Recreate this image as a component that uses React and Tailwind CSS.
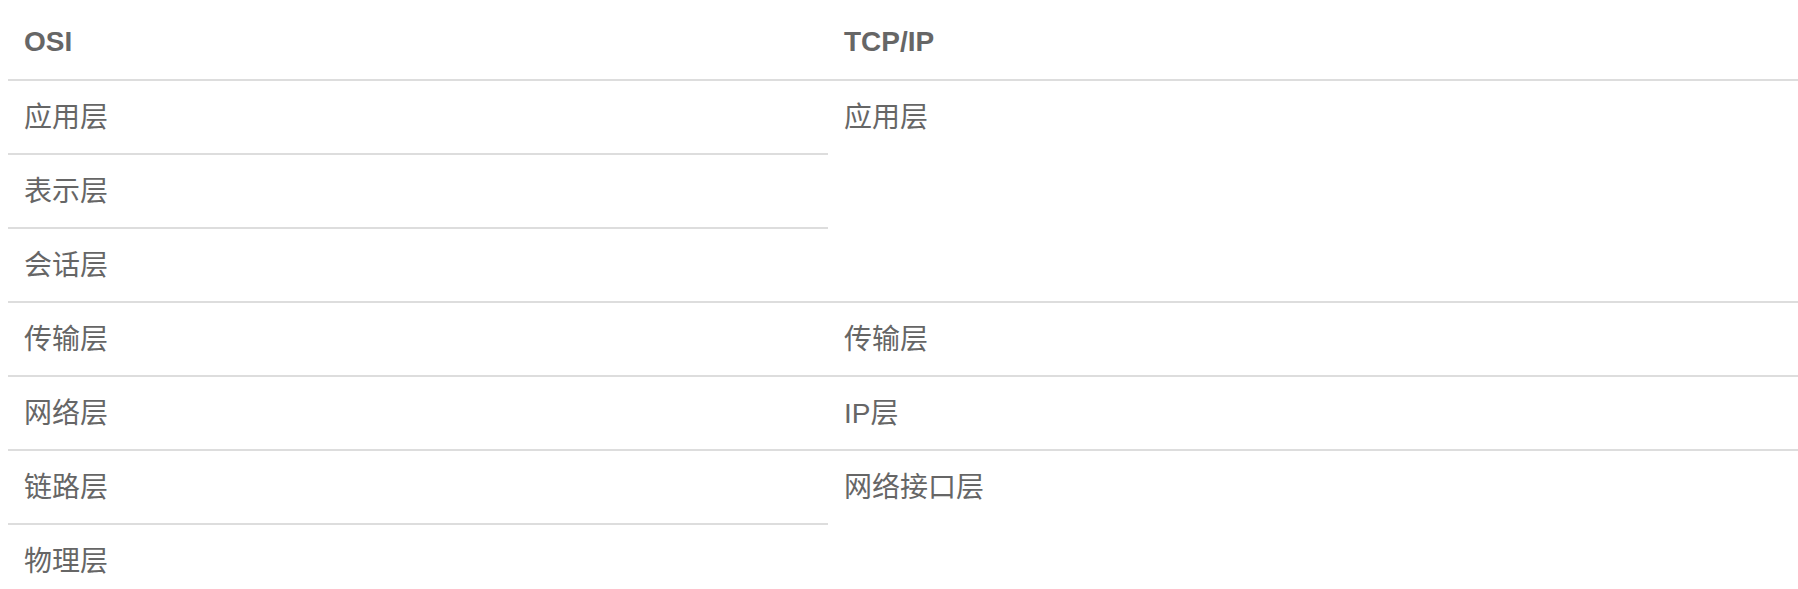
export default function App() {
  const cell = "border-t-2 border-[#ddd] px-4 pt-4 pb-[14px] align-top text-left font-normal";
  return (
    <div
      className="bg-white pl-2 text-[28px] leading-[42px] text-[#666] overflow-hidden h-[589px]"
      style={{ fontFamily: '"Liberation Sans", Arial, "Noto Sans CJK SC", sans-serif' }}
    >
      <table className="w-[1790px] table-fixed border-collapse">
        <colgroup>
          <col className="w-[820px]" />
          <col />
        </colgroup>
        <thead>
          <tr>
            <th className="px-4 pt-[21px] pb-4 text-left font-bold align-top">OSI</th>
            <th className="px-4 pt-[21px] pb-4 text-left font-bold align-top">TCP/IP</th>
          </tr>
        </thead>
        <tbody>
          <tr>
            <td className={cell}>应用层</td>
            <td className={cell} rowSpan={3}>应用层</td>
          </tr>
          <tr>
            <td className={cell}>表示层</td>
          </tr>
          <tr>
            <td className={cell}>会话层</td>
          </tr>
          <tr>
            <td className={cell}>传输层</td>
            <td className={cell}>传输层</td>
          </tr>
          <tr>
            <td className={cell}>网络层</td>
            <td className={cell}>IP层</td>
          </tr>
          <tr>
            <td className={cell}>链路层</td>
            <td className={cell} rowSpan={2}>网络接口层</td>
          </tr>
          <tr>
            <td className={cell}>物理层</td>
          </tr>
        </tbody>
      </table>
    </div>
  );
}
